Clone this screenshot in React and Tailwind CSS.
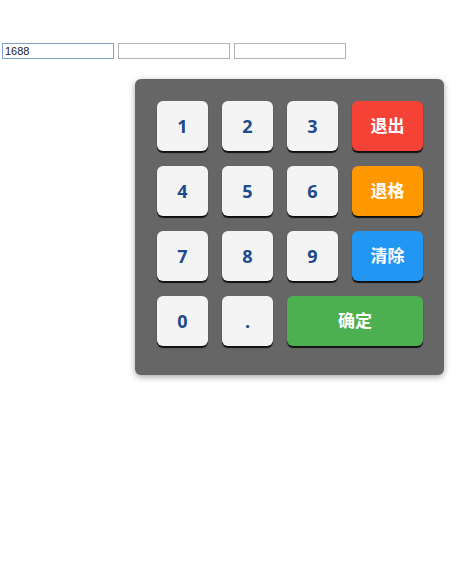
import React from 'react';

const KEYS = [
  { label: '1' }, { label: '2' }, { label: '3' }, { label: '退出', cls: 'bg-[#f44336] text-white text-[17px]' },
  { label: '4' }, { label: '5' }, { label: '6' }, { label: '退格', cls: 'bg-[#ff9800] text-white text-[17px]' },
  { label: '7' }, { label: '8' }, { label: '9' }, { label: '清除', cls: 'bg-[#2196f3] text-white text-[17px]' },
  { label: '0' }, { label: '.' }, { label: '确定', cls: 'col-span-2 bg-[#4caf50] text-white text-[17px]' },
];

export default function App() {
  return (
    <div className="min-h-[584px] bg-white" style={{ fontFamily: '"Open Sans", "Noto Sans CJK SC", sans-serif' }}>
      <div className="flex gap-[4px] pl-[2px] pt-[43px]">
        <input
          defaultValue="1688"
          className="w-[112px] h-[16px] border border-[#7da2ce] px-[2px] text-[11px] leading-none text-[#222] outline-none"
          style={{ fontFamily: '"Liberation Sans", sans-serif' }}
        />
        <input className="w-[112px] h-[16px] border border-[#b5b5b5] px-[2px] text-[11px] outline-none" />
        <input className="w-[112px] h-[16px] border border-[#b5b5b5] px-[2px] text-[11px] outline-none" />
      </div>

      <div className="ml-[135px] mt-[20px] w-[309px] h-[296px] rounded-[6px] bg-[#666666] pl-[22px] pr-[21px] pt-[22px] shadow-[0_2px_6px_rgba(0,0,0,0.35)]">
        <div className="grid grid-cols-[51px_51px_51px_71px] auto-rows-[50px] gap-x-[14px] gap-y-[15px]">
          {KEYS.map(k => (
            <button
              key={k.label}
              className={`flex items-center justify-center rounded-[6px] font-bold shadow-[0_2px_1px_rgba(0,0,0,0.85)] ${k.cls || 'bg-[#f4f4f4] text-[#1e4b8c] text-[18px]'}`}
            >
              {k.label}
            </button>
          ))}
        </div>
      </div>
    </div>
  );
}
